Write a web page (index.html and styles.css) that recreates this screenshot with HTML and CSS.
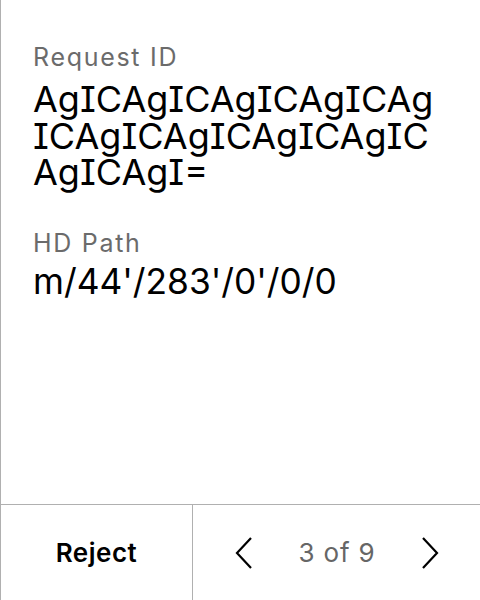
FILE: index.html
```html
<!DOCTYPE html>
<html>
<head>
<meta charset="utf-8">
<link rel="stylesheet" href="styles.css">
</head>
<body>
<div class="screen">
  <main class="content">
    <div class="field">
      <div class="label">Request ID</div>
      <div class="value value-id">AgICAgICAgICAgICAgICAgICAgICAgICAgICAgICAgI=</div>
    </div>
    <div class="field">
      <div class="label">HD Path</div>
      <div class="value value-path">m/44'/283'/0'/0/0</div>
    </div>
  </main>
  <footer class="actions">
    <button class="reject">Reject</button>
    <div class="pager">
      <button class="nav" aria-label="Previous">
        <svg width="18" height="32" viewBox="0 0 18 32"><path d="M16 1 L2 16 L16 31" fill="none" stroke="#000" stroke-width="2.2"/></svg>
      </button>
      <span class="count">3 of 9</span>
      <button class="nav" aria-label="Next">
        <svg width="18" height="32" viewBox="0 0 18 32"><path d="M2 1 L16 16 L2 31" fill="none" stroke="#000" stroke-width="2.2"/></svg>
      </button>
    </div>
  </footer>
</div>
</body>
</html>
```
FILE: styles.css
```css
html, body {
  margin: 0;
  padding: 0;
  background: #fff;
}
.screen {
  width: 480px;
  height: 600px;
  box-sizing: border-box;
  border-left: 1px solid #b0b0b0;
  display: flex;
  flex-direction: column;
  font-family: Inter, "Noto Sans", sans-serif;
  color: #000;
}
.content {
  flex: 1;
  padding: 42px 37px 0 32px;
  display: flex;
  flex-direction: column;
  gap: 37px;
}
.label {
  font-size: 25px;
  line-height: 30px;
  letter-spacing: 1.7px;
  color: #6b6b6b;
}
.value {
  color: #000;
  font-feature-settings: "cv08";
}
.value-id {
  font-size: 36px;
  line-height: 36.5px;
  word-break: break-all;
  margin-top: 9px;
}
.value-path {
  font-size: 35.3px;
  line-height: 40px;
  margin-top: 4px;
}
.actions {
  height: 96px;
  flex: none;
  box-sizing: border-box;
  border-top: 1px solid #b0b0b0;
  display: flex;
}
.reject {
  width: 192px;
  box-sizing: border-box;
  border: none;
  border-right: 1px solid #b0b0b0;
  background: none;
  font-family: inherit;
  font-size: 26px;
  font-weight: 600;
  letter-spacing: 0.5px;
  color: #000;
  padding: 0;
}
.pager {
  flex: 1;
  display: flex;
  align-items: center;
  justify-content: space-between;
  padding: 0 41px 0 42px;
}
.nav {
  border: none;
  background: none;
  padding: 0;
  display: flex;
}
.count {
  font-size: 26px;
  letter-spacing: 0.8px;
  color: #666;
}
```
